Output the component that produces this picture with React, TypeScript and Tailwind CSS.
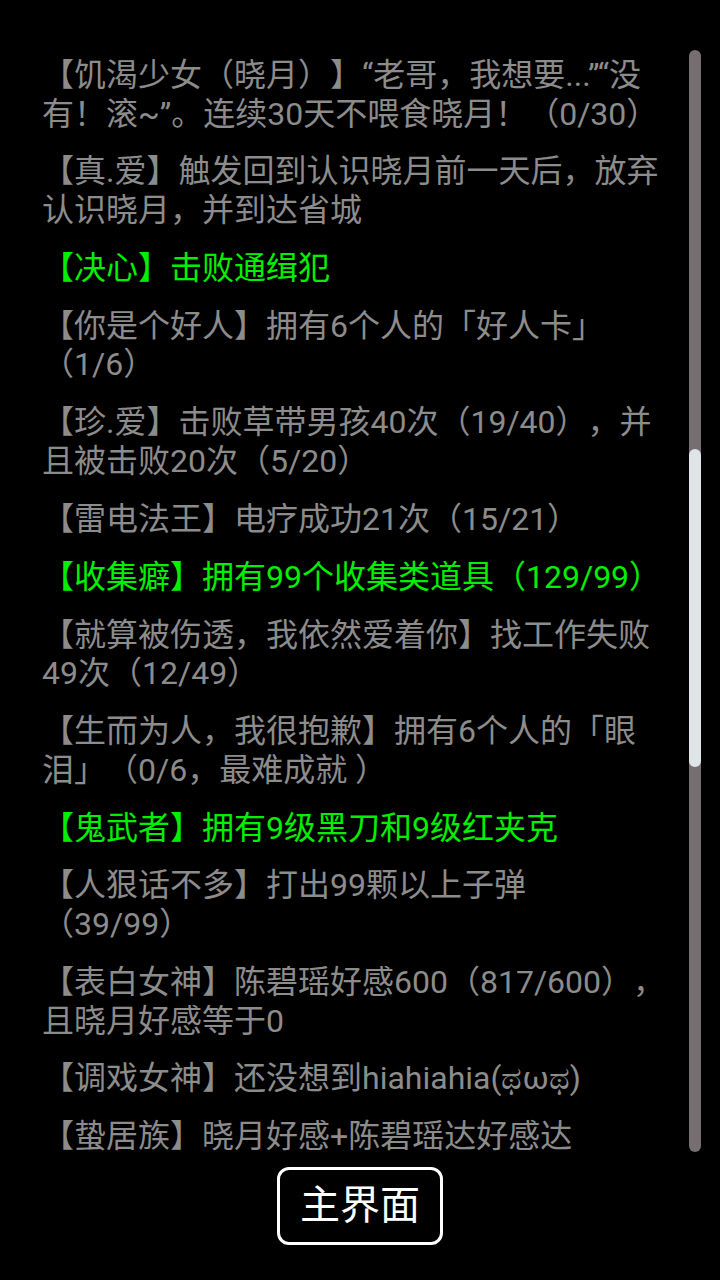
type Achievement = {
  text: string;
  done?: boolean;
};

const achievements: Achievement[] = [
  { text: '【饥渴少女（晓月）】“老哥，我想要...”“没有！滚~”。连续30天不喂食晓月！（0/30）' },
  { text: '【真.爱】触发回到认识晓月前一天后，放弃认识晓月，并到达省城' },
  { text: '【决心】击败通缉犯', done: true },
  { text: '【你是个好人】拥有6个人的「好人卡」（1/6）' },
  { text: '【珍.爱】击败草带男孩40次（19/40），并且被击败20次（5/20）' },
  { text: '【雷电法王】电疗成功21次（15/21）' },
  { text: '【收集癖】拥有99个收集类道具（129/99）', done: true },
  { text: '【就算被伤透，我依然爱着你】找工作失败49次（12/49）' },
  { text: '【生而为人，我很抱歉】拥有6个人的「眼泪」（0/6，最难成就 ）' },
  { text: '【鬼武者】拥有9级黑刀和9级红夹克', done: true },
  { text: '【人狠话不多】打出99颗以上子弹（39/99）' },
  { text: '【表白女神】陈碧瑶好感600（817/600），且晓月好感等于0' },
  { text: '【调戏女神】还没想到hiahiahia(ಥωಥ)' },
  { text: '【蛰居族】晓月好感+陈碧瑶达好感达' },
];

export default function App() {
  return (
    <div
      className="h-[1280px] w-[720px] bg-black flex flex-col pt-[50px] overflow-hidden [text-spacing-trim:space-all]"
      style={{ fontFamily: 'Roboto, "Noto Sans CJK SC", "DejaVu Sans", sans-serif' }}
    >
      {/* List + scrollbar */}
      <div className="h-[1102px] flex">
        <div className="ml-[42px] w-[624px] overflow-hidden pt-[6px] flex flex-col gap-[19.3px]">
          {achievements.map((a, i) => (
            <p
              key={i}
              className={`text-[32px] leading-[38.6px] ${a.done ? 'text-[#00f000]' : 'text-[#8c8c8c]'}`}
            >
              {a.text}
            </p>
          ))}
        </div>
        <div className="ml-auto mr-[19px] w-[12px] h-full rounded-full bg-[#776e72] flex flex-col">
          <div className="mt-[399px] h-[318px] w-full rounded-full bg-[#dfe4e7]"></div>
        </div>
      </div>

      {/* Bottom button */}
      <div className="flex justify-center mt-[15px]">
        <button
          type="button"
          className="w-[166px] h-[78px] border-[3px] border-white rounded-[12px] text-white text-[40px] leading-none flex items-center justify-center"
        >
          主界面
        </button>
      </div>
    </div>
  );
}
